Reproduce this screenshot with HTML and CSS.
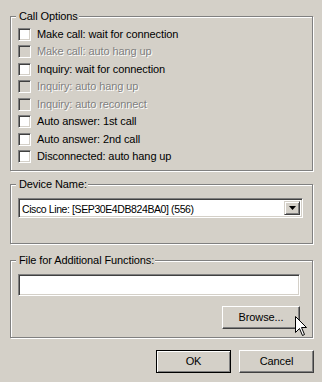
FILE: index.html
```html
<!DOCTYPE html>
<html>
<head>
<meta charset="utf-8">
<link rel="stylesheet" href="styles.css">
</head>
<body>
<div class="dialog">
  <div class="group group-options">
    <div class="group-title"><span>Call Options</span></div>
    <div class="rows">
      <div class="row"><span class="check"></span><span class="label">Make call: wait for connection</span></div>
      <div class="row disabled"><span class="check"></span><span class="label">Make call: auto hang up</span></div>
      <div class="row"><span class="check"></span><span class="label">Inquiry: wait for connection</span></div>
      <div class="row disabled"><span class="check"></span><span class="label">Inquiry: auto hang up</span></div>
      <div class="row disabled"><span class="check"></span><span class="label">Inquiry: auto reconnect</span></div>
      <div class="row"><span class="check"></span><span class="label">Auto answer: 1st call</span></div>
      <div class="row"><span class="check"></span><span class="label">Auto answer: 2nd call</span></div>
      <div class="row"><span class="check"></span><span class="label">Disconnected: auto hang up</span></div>
    </div>
  </div>

  <div class="group group-device">
    <div class="group-title"><span>Device Name:</span></div>
    <div class="combo">
      <span class="combo-text">Cisco Line: [SEP30E4DB824BA0] (556)</span>
      <span class="combo-btn"><svg width="7" height="4" viewBox="0 0 7 4"><path d="M0 0h7L3.5 4z" fill="#000"/></svg></span>
    </div>
  </div>

  <div class="group group-file">
    <div class="group-title"><span>File for Additional Functions:</span></div>
    <div class="file-col">
      <div class="field"></div>
      <div class="btn btn-browse">Browse...</div>
    </div>
    <svg class="cursor" width="13" height="21" viewBox="0 0 13 21"><path d="M0.5 0.5V16.5L4.5 12.5L7.5 19.5L9.5 18.5L6.5 11.5H11.5Z" fill="#fff" stroke="#000" stroke-width="1" stroke-linejoin="miter"/></svg>
  </div>

  <div class="buttons">
    <div class="btn btn-default">OK</div>
    <div class="btn">Cancel</div>
  </div>
</div>
</body>
</html>
```

FILE: styles.css
```css
html, body {
  margin: 0;
  padding: 0;
  background: #d4d0c8;
}
body {
  width: 322px;
  height: 382px;
  overflow: hidden;
  font-family: "Liberation Sans", Arial, sans-serif;
  font-size: 11px;
  letter-spacing: -0.1px;
  color: #000;
}
.dialog {
  padding: 16px 9px 0 10px;
  display: flex;
  flex-direction: column;
}
.group {
  position: relative;
  width: 303px;
  box-sizing: border-box;
  border: 1px solid #808080;
  box-shadow: inset 1px 1px 0 #fff, 1px 1px 0 #fff;
  padding: 0 7px;
}
.group-title {
  display: flex;
  height: 13px;
  margin-top: -7px;
  margin-left: -2px;
}
.group-title span {
  background: #d4d0c8;
  padding: 0 1px 0 3px;
  line-height: 13px;
}
.group-options {
  padding-bottom: 7px;
}
.rows {
  margin-top: 5px;
  display: flex;
  flex-direction: column;
  gap: 4.43px;
}
.row {
  display: flex;
  align-items: center;
  height: 13px;
}
.check {
  width: 13px;
  height: 13px;
  box-sizing: border-box;
  background: #fff;
  border: 1px solid;
  border-color: #808080 #fff #fff #808080;
  box-shadow: inset 1px 1px 0 #404040, inset -1px -1px 0 #d4d0c8;
  flex: none;
}
.label {
  margin-left: 6px;
  line-height: 13px;
  white-space: nowrap;
}
.row.disabled .check {
  background: #d4d0c8;
}
.row.disabled .label {
  color: #808080;
  text-shadow: 1px 1px 0 #fff;
}
.group-device {
  margin-top: 13px;
  height: 60px;
}
.combo {
  margin-top: 7px;
  width: 285px;
  height: 20px;
  box-sizing: border-box;
  background: #fff;
  border: 1px solid;
  border-color: #808080 #fff #fff #808080;
  box-shadow: inset 1px 1px 0 #404040, inset -1px -1px 0 #d4d0c8;
  padding: 2px;
  display: flex;
  align-items: stretch;
}
.combo-text {
  flex: 1;
  line-height: 16px;
  padding-left: 1px;
  white-space: nowrap;
  font-size: 10.5px;
  letter-spacing: -0.4px;
}
.combo-btn {
  width: 16px;
  box-sizing: border-box;
  background: #d4d0c8;
  border: 1px solid;
  border-color: #d4d0c8 #404040 #404040 #d4d0c8;
  box-shadow: inset 1px 1px 0 #fff, inset -1px -1px 0 #808080;
  display: flex;
  align-items: center;
  justify-content: center;
}
.group-file {
  margin-top: 16px;
  padding-bottom: 8px;
}
.file-col {
  margin-top: 7px;
  width: 282px;
  display: flex;
  flex-direction: column;
  align-items: flex-end;
  gap: 10px;
}
.field {
  width: 282px;
  height: 22px;
  box-sizing: border-box;
  background: #fff;
  border: 1px solid;
  border-color: #808080 #fff #fff #808080;
  box-shadow: inset 1px 1px 0 #404040, inset -1px -1px 0 #d4d0c8;
}
.btn {
  width: 75px;
  height: 23px;
  box-sizing: border-box;
  border: 1px solid;
  border-color: #fff #404040 #404040 #fff;
  box-shadow: inset -1px -1px 0 #808080;
  display: flex;
  align-items: center;
  justify-content: center;
  line-height: 13px;
}
.btn-browse {
  width: 78px;
}
.btn-default {
  border-color: #000;
  box-shadow: inset 1px 1px 0 #fff, inset -1px -1px 0 #808080;
}
.cursor {
  position: absolute;
  left: 284px;
  top: 55px;
}
.buttons {
  margin-top: 12px;
  width: 304px;
  display: flex;
  justify-content: flex-end;
  gap: 8px;
}
```
